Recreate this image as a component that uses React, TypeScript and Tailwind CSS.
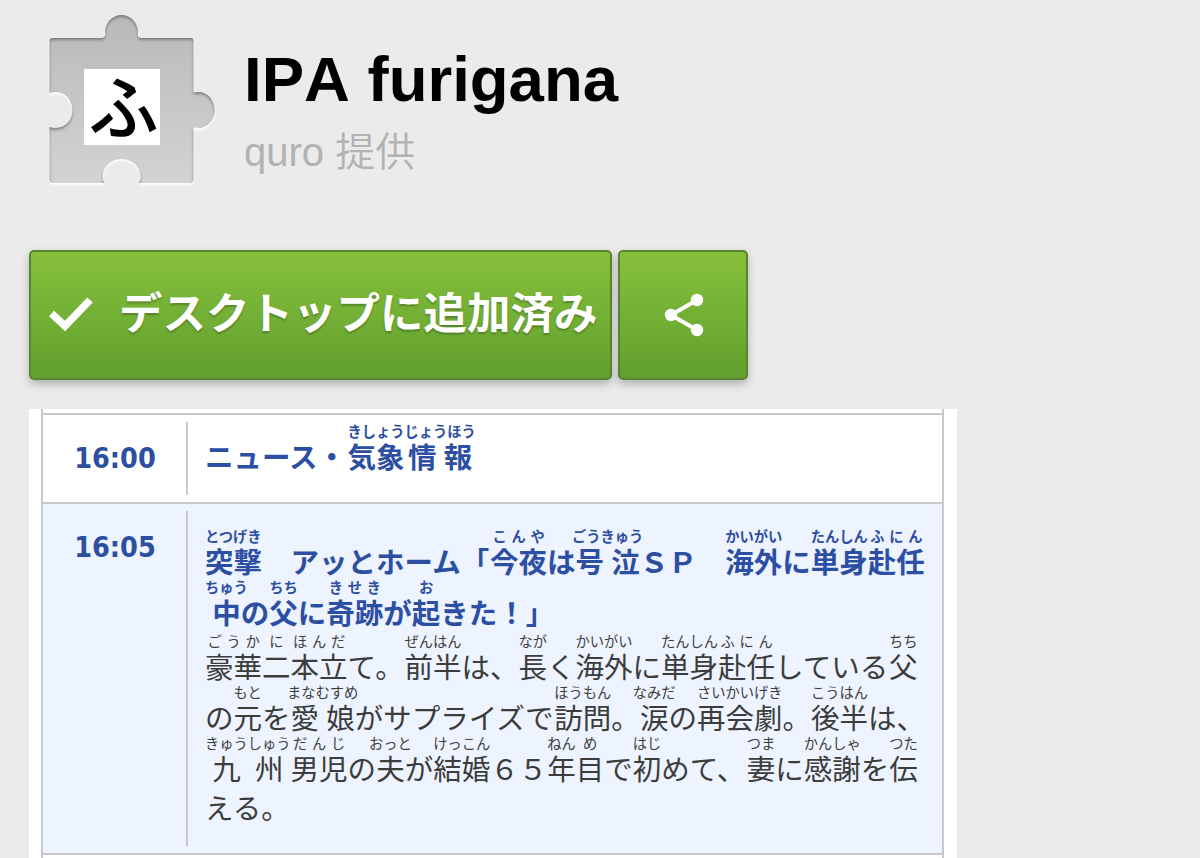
interface Segment {
  base: string;
  ruby?: string;
  // how far the reading hangs over its neighbours, in px
  left?: number;
  right?: number;
}

const BASE = 28.5;
const RUBY = 14.25;

const newsLine: Segment[] = [
  { base: 'ニュース・' },
  { base: '気象', ruby: 'きしょう' },
  { base: '情報', ruby: 'じょうほう' },
];

const titleLines: Segment[][] = [
  [
    { base: '突撃', ruby: 'とつげき' },
    { base: '　アッとホーム「' },
    { base: '今夜', ruby: 'こんや' },
    { base: 'は' },
    { base: '号泣', ruby: 'ごうきゅう', left: 3.5, right: 3.5 },
    { base: 'ＳＰ　' },
    { base: '海外', ruby: 'かいがい' },
    { base: 'に' },
    { base: '単身', ruby: 'たんしん' },
    { base: '赴任', ruby: 'ふにん' },
  ],
  [
    { base: '中', ruby: 'ちゅう', right: 7 },
    { base: 'の' },
    { base: '父', ruby: 'ちち' },
    { base: 'に' },
    { base: '奇跡', ruby: 'きせき' },
    { base: 'が' },
    { base: '起', ruby: 'お' },
    { base: 'きた！」' },
  ],
];

const bodyLines: Segment[][] = [
  [
    { base: '豪華', ruby: 'ごうか' },
    { base: '二', ruby: 'に' },
    { base: '本立', ruby: 'ほんだ' },
    { base: 'て。' },
    { base: '前半', ruby: 'ぜんはん' },
    { base: 'は、' },
    { base: '長', ruby: 'なが' },
    { base: 'く' },
    { base: '海外', ruby: 'かいがい' },
    { base: 'に' },
    { base: '単身', ruby: 'たんしん' },
    { base: '赴任', ruby: 'ふにん' },
    { base: 'している' },
    { base: '父', ruby: 'ちち' },
  ],
  [
    { base: 'の' },
    { base: '元', ruby: 'もと' },
    { base: 'を' },
    { base: '愛娘', ruby: 'まなむすめ', left: 3.5, right: 3.5 },
    { base: 'がサプライズで' },
    { base: '訪問', ruby: 'ほうもん' },
    { base: '。' },
    { base: '涙', ruby: 'なみだ', left: 7, right: 7 },
    { base: 'の' },
    { base: '再会', ruby: 'さいかい' },
    { base: '劇', ruby: 'げき' },
    { base: '。' },
    { base: '後半', ruby: 'こうはん' },
    { base: 'は、' },
  ],
  [
    { base: '九州', ruby: 'きゅうしゅう' },
    { base: '男児', ruby: 'だんじ' },
    { base: 'の' },
    { base: '夫', ruby: 'おっと', left: 7, right: 7 },
    { base: 'が' },
    { base: '結婚', ruby: 'けっこん' },
    { base: '６５' },
    { base: '年', ruby: 'ねん' },
    { base: '目', ruby: 'め' },
    { base: 'で' },
    { base: '初', ruby: 'はじ' },
    { base: 'めて、' },
    { base: '妻', ruby: 'つま' },
    { base: 'に' },
    { base: '感謝', ruby: 'かんしゃ' },
    { base: 'を' },
    { base: '伝', ruby: 'つた' },
  ],
];

// Spreads the characters evenly over the given width (space-around)
function spread(text: string, size: number, width: number) {
  const extra = width / text.length - size;
  return { letterSpacing: extra, paddingLeft: extra / 2, marginRight: -extra / 2 };
}

function Furigana({ base, ruby, left = 0, right = 0 }: Segment) {
  const width = Math.max(base.length * BASE, (ruby ?? '').length * RUBY);
  return (
    <span
      className="flex shrink-0 flex-col justify-end"
      style={{ width, marginLeft: -left, marginRight: -right }}
    >
      {ruby && (
        <span className="h-[17px] text-[14.25px] leading-[17px]" style={spread(ruby, RUBY, width)}>
          {ruby}
        </span>
      )}
      <span className="h-[34px] text-[28.5px] leading-[34px]" style={spread(base, BASE, width)}>
        {base}
      </span>
    </span>
  );
}

function Line({ segments }: { segments: Segment[] }) {
  return (
    <p className="flex h-[51px] whitespace-pre">
      {segments.map((segment, i) => (
        <Furigana key={i} {...segment} />
      ))}
    </p>
  );
}

function PuzzleIcon() {
  return (
    <div className="relative h-[190px] w-[175px] shrink-0">
      <svg viewBox="0 0 175 190" className="h-full w-full">
        <defs>
          <linearGradient id="piece" x1="0" y1="0" x2="0" y2="1">
            <stop offset="0" stopColor="#b9b9b9" />
            <stop offset="1" stopColor="#d3d3d3" />
          </linearGradient>
          <filter id="inset" x="-10%" y="-10%" width="120%" height="120%">
            <feOffset in="SourceAlpha" dy="2" result="moved" />
            <feGaussianBlur in="moved" stdDeviation="1.5" result="soft" />
            <feComposite in="SourceAlpha" in2="soft" operator="out" result="edge" />
            <feFlood floodColor="#555" floodOpacity="0.8" />
            <feComposite in2="edge" operator="in" result="dark" />
            <feOffset in="SourceAlpha" dy="2" result="low" />
            <feGaussianBlur in="low" stdDeviation="0.8" result="lowSoft" />
            <feFlood floodColor="#fff" floodOpacity="0.9" />
            <feComposite in2="lowSoft" operator="in" result="light" />
            <feMerge>
              <feMergeNode in="light" />
              <feMergeNode in="SourceGraphic" />
              <feMergeNode in="dark" />
            </feMerge>
          </filter>
        </defs>
        <path
          d="M13 32H61C65 32 66 30 65.500 27C65 17 73 9 82 9C91 9 99 17 98.500 27C98 30 99 32 103 32H151Q154 32 154 35V86C156 87 157 86 159 86C168 86 175 94 175 104C175 114 168 122 159 122C157 122 156 121 154 122V173Q154 177 151 177H99C101 174 101 172 101 170C101 160 92 153 82 153C72 153 63 160 63 170C63 172 63 174 65 177H13Q10 177 10 173V121C24 125 33 115 33 104C33 93 24 83 10 87V35Q10 32 13 32Z"
          transform="translate(-.5 6)"
          fill="url(#piece)"
          filter="url(#inset)"
        />
      </svg>
      <span className="absolute top-[69px] left-[44px] flex h-[76px] w-[76px] items-center justify-center bg-white pb-[7px] pl-[3px] font-['Noto_Sans_CJK_JP',sans-serif] text-[70px] leading-none font-medium text-black">
        ふ
      </span>
    </div>
  );
}

function CheckIcon() {
  return (
    <svg viewBox="0 0 46 38" className="h-[38px] w-[46px] shrink-0">
      <path d="M3.500 17.500L17 30L42 4" fill="none" stroke="#fff" strokeWidth="7.500" />
    </svg>
  );
}

function ShareIcon() {
  return (
    <svg viewBox="0 0 42 46" className="h-[46px] w-[42px]">
      <path d="M34 8L8 23L34 38" fill="none" stroke="#fff" strokeWidth="4" />
      <circle cx="34" cy="8" r="6.200" fill="#fff" />
      <circle cx="8" cy="23" r="6.200" fill="#fff" />
      <circle cx="34" cy="38" r="6.200" fill="#fff" />
    </svg>
  );
}

const buttonClass =
  'flex h-[130px] items-center rounded-[5px] border-2 border-[#598530] bg-linear-to-b from-[#86c03b] to-[#61a02e] text-white shadow-[0_4px_8px_rgba(0,0,0,0.25)]';

const timeClass =
  "w-[143px] shrink-0 text-center font-['DejaVu_Sans_Condensed','DejaVu_Sans',sans-serif] text-[28.5px] font-bold [font-stretch:condensed] leading-[34px] text-[#2d4f9f]";

export default function App() {
  return (
    <div className="h-[858px] w-[1200px] overflow-hidden bg-[#ebebeb] font-['Liberation_Sans','Noto_Sans_CJK_JP',sans-serif]">
      <header className="flex h-[250px] pl-10">
        <PuzzleIcon />
        <div className="pt-[43px] pl-[29px]">
          <h1 className="text-[63.500px] leading-[72px] font-bold text-black [font-kerning:none]">IPA furigana</h1>
          <p className="mt-[13px] text-[40px] leading-[48px] font-[350] text-[#b2b2b2]">quro 提供</p>
        </div>
      </header>

      <div className="flex gap-[6px] pl-[29px]">
        <button className={`${buttonClass} w-[583px] pl-[17px]`}>
          <CheckIcon />
          <span className="ml-[25px] pb-[9px] font-['Noto_Sans_CJK_JP',sans-serif] text-[43.5px] leading-[52px] font-bold whitespace-nowrap [text-shadow:0_2px_2px_rgba(0,0,0,0.25)]">
            デスクトップに追加済み
          </span>
        </button>
        <button className={`${buttonClass} w-[130px] justify-center pl-px`} aria-label="共有">
          <ShareIcon />
        </button>
      </div>

      <main className="mt-[29px] ml-[29px] h-[449px] w-[928px] bg-white pr-[13px] pl-[12px] font-['Noto_Sans_CJK_JP',sans-serif]">
        <div className="h-full border-x-2 border-[#c9c9cd] pt-1">
          <section className="flex h-[91px] border-y-2 border-[#c9c9cd] py-[7px]">
            <div className={`${timeClass} pt-[20px] pl-px`}>16:00</div>
            <div className="w-px flex-1 border-l-2 border-[#c9c9cd] pl-[17px] font-bold text-[#2d4fa3]">
              <Line segments={newsLine} />
            </div>
          </section>
          <section className="flex h-[351px] border-b-2 border-[#c9c9cd] bg-[#edf4ff] py-[7px]">
            <div className={`${timeClass} pt-[20px] pl-px`}>16:05</div>
            <div className="w-px flex-1 border-l-2 border-[#c9c9cd] pt-[16px] pl-[17px]">
              <div className="font-bold text-[#2d4fa3]">
                {titleLines.map((segments, i) => (
                  <Line key={i} segments={segments} />
                ))}
              </div>
              <div className="mt-[3px] text-[#3c3c3c]">
                {bodyLines.map((segments, i) => (
                  <Line key={i} segments={segments} />
                ))}
                <p className="pt-[5px] text-[28.5px] leading-[34px]">える。</p>
              </div>
            </div>
          </section>
        </div>
      </main>
    </div>
  );
}
